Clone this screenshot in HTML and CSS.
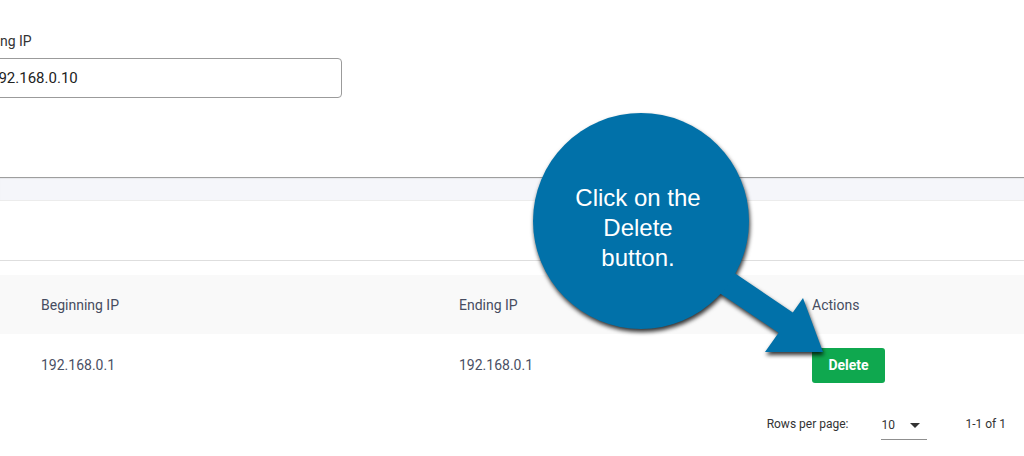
FILE: index.html
```html
<!DOCTYPE html>
<html lang="en">
<head>
<meta charset="utf-8">
<title>IP Ranges</title>
<link rel="stylesheet" href="styles.css">
</head>
<body>
<div class="page">
  <section class="form-section">
    <div class="field">
      <label class="field-label">Ending IP</label>
      <div class="input-box">192.168.0.10</div>
    </div>
  </section>
  <div class="band"></div>
  <div class="toolbar"></div>
  <div class="table-wrap">
    <div class="row head">
      <div class="cell">Beginning IP</div>
      <div class="cell">Ending IP</div>
      <div class="cell">Actions</div>
    </div>
    <div class="row body-row">
      <div class="cell">192.168.0.1</div>
      <div class="cell">192.168.0.1</div>
      <div class="cell"><button class="btn-delete">Delete</button></div>
    </div>
    <div class="pager">
      <span class="pager-label">Rows per page:</span>
      <span class="pager-select"><span>10</span><span class="caret"></span></span>
      <span class="pager-count">1-1 of 1</span>
    </div>
  </div>

  <svg class="callout-shape" width="1024" height="456" viewBox="0 0 1024 456">
    <g class="callout-fill">
      <polygon points="700,240 733,272 792.8,312.5 803,298 823,352 765,352 778.6,332.7 700,280"/>
      <circle cx="641" cy="221" r="108"/>
    </g>
  </svg>
  <div class="callout-text">Click on the<br>Delete<br>button.</div>
</div>
</body>
</html>
```

FILE: styles.css
```css
* { box-sizing: border-box; }
html, body { margin: 0; padding: 0; }
body {
  width: 1024px;
  height: 456px;
  overflow: hidden;
  background: #fff;
  font-family: Roboto, "Liberation Sans", Arial, sans-serif;
  color: #333;
}
.page { position: relative; width: 1024px; height: 456px; overflow: hidden; }

.form-section {
  height: 177px;
  padding-top: 32px;
}
.field {
  margin-left: -26px;
  width: 368px;
}
.field-label {
  display: block;
  margin-left: -1px;
  font-size: 14px;
  line-height: 19px;
  color: #333;
  margin-bottom: 7px;
}
.input-box {
  height: 40px;
  border: 1px solid #9b9b9b;
  border-radius: 4px;
  padding: 0 0 0 15px;
  font-size: 15px;
  line-height: 38px;
  color: #222;
}

.band {
  height: 24px;
  border-top: 1px solid #9e9e9e;
  border-bottom: 1px solid #ececec;
  background: #f5f6fa;
  box-shadow: inset 0 1px 1px rgba(0,0,0,0.06);
}
.toolbar {
  height: 60px;
  border-bottom: 1px solid #dedede;
}
.table-wrap { padding-top: 14px; }
.row {
  display: grid;
  grid-template-columns: 418px 353px 1fr;
  padding-left: 41px;
  align-items: center;
}
.row.head {
  height: 59px;
  background: #f9f9f9;
  font-size: 14px;
  color: #464c60;
}
.row.body-row {
  height: 62px;
  font-size: 14px;
  color: #4a5064;
}
.btn-delete {
  width: 73px;
  height: 35px;
  border: none;
  border-radius: 3px;
  background: #0fa84f;
  color: #fff;
  font-family: Roboto, "Liberation Sans", Arial, sans-serif;
  font-size: 14px;
  font-weight: 700;
  padding: 0;
}
.pager {
  display: flex;
  justify-content: flex-end;
  align-items: center;
  height: 44px;
  margin-top: 6px;
  padding-right: 18px;
  font-size: 12px;
  color: #333;
}
.pager-label { margin-right: 33px; }
.pager-select {
  display: flex;
  align-items: center;
  width: 46px;
  height: 30px;
  padding-top: 1px;
  border-bottom: 1px solid #8f8f8f;
  margin-right: 38px;
  margin-top: 2px;
}
.pager-select span:first-child { width: 29px; }
.caret {
  width: 0; height: 0;
  border-left: 5px solid transparent;
  border-right: 5px solid transparent;
  border-top: 5px solid #333;
}

.callout-shape {
  position: absolute;
  left: 0; top: 0;
  pointer-events: none;
}
.callout-fill {
  fill: #0171a9;
  filter: drop-shadow(1px 3px 2px rgba(0,0,0,0.8));
}
.callout-text {
  position: absolute;
  left: 538px;
  top: 183px;
  width: 200px;
  text-align: center;
  font-family: "Liberation Sans", Arial, sans-serif;
  font-size: 24px;
  line-height: 30px;
  color: #fff;
}
```
